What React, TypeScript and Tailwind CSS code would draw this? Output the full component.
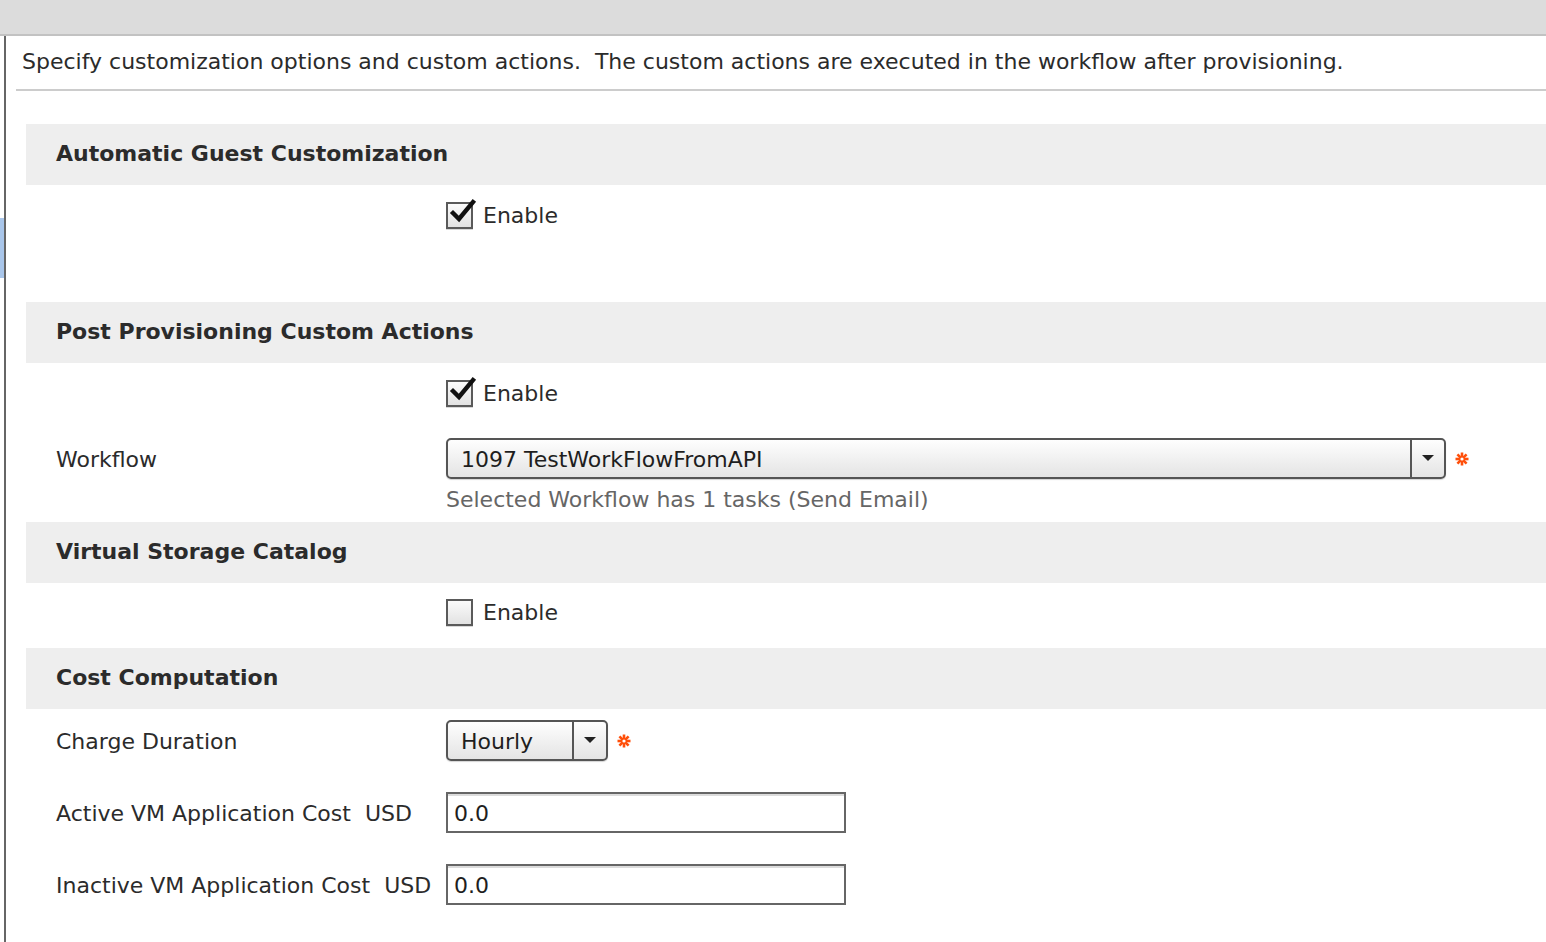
import React from "react";

const font = { fontFamily: '"DejaVu Sans", Verdana, sans-serif' };

function Asterisk() {
  return (
    <svg width="14" height="14" viewBox="0 0 14 14" className="ml-[9px]">
      <g stroke="#ff4f0a" strokeWidth="2.6" strokeLinecap="butt">
        <line x1="7" y1="0.5" x2="7" y2="13.5" />
        <line x1="0.5" y1="7" x2="13.5" y2="7" />
        <line x1="2.4" y1="2.4" x2="11.6" y2="11.6" />
        <line x1="11.6" y1="2.4" x2="2.4" y2="11.6" />
      </g>
      <circle cx="7" cy="7" r="1.6" fill="#ffffff" />
    </svg>
  );
}

function Checkbox({ checked }: { checked: boolean }) {
  return (
    <div className="relative w-[27px] h-[27px] border-2 border-[#5a5a5a] bg-gradient-to-b from-[#fbfbfb] to-[#e2e2e2] shadow-[0_1px_0_#d8d8d8]">
      {checked && (
        <svg
          width="30"
          height="30"
          viewBox="0 0 30 30"
          className="absolute left-[1px] top-[-8px]"
        >
          <path
            d="M4 17 L10 23 L24 6"
            fill="none"
            stroke="#111"
            strokeWidth="4.4"
            strokeLinecap="square"
            strokeLinejoin="miter"
          />
        </svg>
      )}
    </div>
  );
}

function EnableRow({ checked }: { checked: boolean }) {
  return (
    <div className="flex items-center h-[28px] pl-[420px]">
      <Checkbox checked={checked} />
      <span className="ml-[10px] text-[22px] text-[#2b2b2b] pt-[1px]">Enable</span>
    </div>
  );
}

function SectionHeader({ title }: { title: string }) {
  return (
    <div className="h-[61px] bg-[#eeeeee] flex items-center pl-[30px] pb-[2px]">
      <span className="font-bold text-[22px] text-[#2b2b2b]">{title}</span>
    </div>
  );
}

function Select({ value, width }: { value: string; width: string }) {
  return (
    <div
      className={`flex items-stretch h-[41px] rounded-[5px] border-2 border-[#555] bg-gradient-to-b from-[#fefefe] to-[#e4e4e4] shadow-[0_1px_1px_#d4d4d4] ${width}`}
    >
      <div className="flex-1 flex items-center pl-[13px] pt-[1px] text-[22px] text-[#1e1e1e]">
        {value}
      </div>
      <div className="w-[34px] border-l-2 border-[#555] flex items-center justify-center">
        <svg width="12" height="7" viewBox="0 0 12 7">
          <path d="M0 0 H12 L6 6 Z" fill="#222" />
        </svg>
      </div>
    </div>
  );
}

function TextInput({ value }: { value: string }) {
  return (
    <div className="w-[400px] h-[41px] border-2 border-[#666] bg-white flex items-center pl-[6px] pt-[1px] text-[22px] text-[#1e1e1e] shadow-[inset_0_2px_0_#dcdcdc]">
      {value}
    </div>
  );
}

function Label({ children }: { children: React.ReactNode }) {
  return (
    <div className="w-[420px] pl-[30px] pt-[1px] text-[22px] whitespace-pre">{children}</div>
  );
}

export default function App() {
  return (
    <div className="w-[1546px] h-[942px] bg-white overflow-hidden flex flex-col" style={font}>
      <div className="h-[36px] bg-[#dcdcdc] border-b-2 border-[#c2c2c2] shrink-0" />
      <div className="flex flex-1">
        <div className="w-[4px] flex flex-col">
          <div className="h-[182px]" />
          <div className="h-[60px] bg-[#a9c6ea]" />
        </div>
        <div className="w-[2px] bg-[#666]" />
        <div className="flex-1 flex flex-col">
          <div className="h-[53px] flex items-center pl-[16px] pb-[2px] text-[22px] text-[#2b2b2b] whitespace-pre">
            {"Specify customization options and custom actions.  The custom actions are executed in the workflow after provisioning."}
          </div>
          <div className="ml-[10px] h-[2px] bg-[#cccccc]" />
          <div className="ml-[20px] mt-[33px] flex flex-col text-[#2b2b2b]">
            <SectionHeader title="Automatic Guest Customization" />
            <div className="pt-[16px] pb-[73px]">
              <EnableRow checked={true} />
            </div>

            <SectionHeader title="Post Provisioning Custom Actions" />
            <div className="pt-[16px] pb-[13px]">
              <EnableRow checked={true} />
              <div className="flex items-center mt-[31px]">
                <Label>Workflow</Label>
                <Select value="1097 TestWorkFlowFromAPI" width="w-[1000px]" />
                <Asterisk />
              </div>
              <div className="pl-[420px] mt-[10px] h-[20px] flex items-center text-[22px] text-[#666]">
                Selected Workflow has 1 tasks (Send Email)
              </div>
            </div>

            <SectionHeader title="Virtual Storage Catalog" />
            <div className="pt-[15px] pb-[22px]">
              <EnableRow checked={false} />
            </div>

            <SectionHeader title="Cost Computation" />
            <div className="pt-[11px]">
              <div className="flex items-center">
                <Label>Charge Duration</Label>
                <Select value="Hourly" width="w-[162px]" />
                <Asterisk />
              </div>
              <div className="flex items-center mt-[31px]">
                <Label>Active VM Application Cost  USD</Label>
                <TextInput value="0.0" />
              </div>
              <div className="flex items-center mt-[31px]">
                <Label>Inactive VM Application Cost  USD</Label>
                <TextInput value="0.0" />
              </div>
            </div>
          </div>
        </div>
      </div>
    </div>
  );
}
